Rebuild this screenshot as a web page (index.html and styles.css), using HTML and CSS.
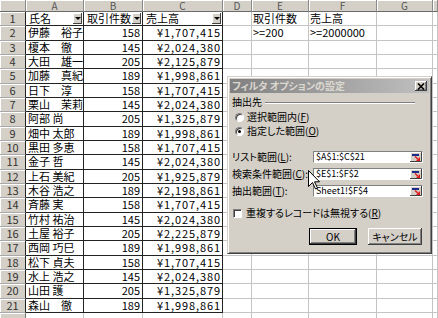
FILE: index.html
```html
<!DOCTYPE html>
<html lang="ja">
<head>
<meta charset="utf-8">
<title>フィルタ オプションの設定</title>
<link rel="stylesheet" href="styles.css">
</head>
<body>
<div class="sheet">
  <div class="row hdr"><span></span><span>A</span><span>B</span><span>C</span><span>D</span><span>E</span><span>F</span><span>G</span><span></span></div>
  <div class="row data"><span class="rh">1</span><span class="c f"><em>氏名</em><i class="dd"></i></span><span class="c f"><em>取引件数</em><i class="dd"></i></span><span class="c f"><em>売上高</em><i class="dd"></i></span><span></span><span class="t">取引件数</span><span class="t">売上高</span><span></span><span></span></div>
  <div class="row data"><span class="rh">2</span><span class="c">伊藤　裕子</span><span class="c n">158</span><span class="c y">¥1,707,415</span><span></span><span class="t">&gt;=200</span><span class="t">&gt;=2000000</span><span></span><span></span></div>
  <div class="row data"><span class="rh">3</span><span class="c">榎本　徹</span><span class="c n">145</span><span class="c y">¥2,024,380</span><span></span><span></span><span></span><span></span><span></span></div>
  <div class="row data"><span class="rh">4</span><span class="c">大田　雄一</span><span class="c n">205</span><span class="c y">¥2,125,879</span><span></span><span></span><span></span><span></span><span></span></div>
  <div class="row data"><span class="rh">5</span><span class="c">加藤　真紀</span><span class="c n">189</span><span class="c y">¥1,998,861</span><span></span><span></span><span></span><span></span><span></span></div>
  <div class="row data"><span class="rh">6</span><span class="c">日下　淳</span><span class="c n">158</span><span class="c y">¥1,707,415</span><span></span><span></span><span></span><span></span><span></span></div>
  <div class="row data"><span class="rh">7</span><span class="c">栗山　茉莉</span><span class="c n">145</span><span class="c y">¥2,024,380</span><span></span><span></span><span></span><span></span><span></span></div>
  <div class="row data"><span class="rh">8</span><span class="c">阿部 尚</span><span class="c n">205</span><span class="c y">¥1,325,879</span><span></span><span></span><span></span><span></span><span></span></div>
  <div class="row data"><span class="rh">9</span><span class="c">畑中 太郎</span><span class="c n">189</span><span class="c y">¥1,998,861</span><span></span><span></span><span></span><span></span><span></span></div>
  <div class="row data"><span class="rh">10</span><span class="c">黒田 多恵</span><span class="c n">158</span><span class="c y">¥1,707,415</span><span></span><span></span><span></span><span></span><span></span></div>
  <div class="row data"><span class="rh">11</span><span class="c">金子 哲</span><span class="c n">145</span><span class="c y">¥2,024,380</span><span></span><span></span><span></span><span></span><span></span></div>
  <div class="row data"><span class="rh">12</span><span class="c">上石 美紀</span><span class="c n">205</span><span class="c y">¥1,925,879</span><span></span><span></span><span></span><span></span><span></span></div>
  <div class="row data"><span class="rh">13</span><span class="c">木谷 浩之</span><span class="c n">189</span><span class="c y">¥2,198,861</span><span></span><span></span><span></span><span></span><span></span></div>
  <div class="row data"><span class="rh">14</span><span class="c">斉藤 実</span><span class="c n">158</span><span class="c y">¥1,707,415</span><span></span><span></span><span></span><span></span><span></span></div>
  <div class="row data"><span class="rh">15</span><span class="c">竹村 祐治</span><span class="c n">145</span><span class="c y">¥2,024,380</span><span></span><span></span><span></span><span></span><span></span></div>
  <div class="row data"><span class="rh">16</span><span class="c">土屋 裕子</span><span class="c n">205</span><span class="c y">¥2,225,879</span><span></span><span></span><span></span><span></span><span></span></div>
  <div class="row data"><span class="rh">17</span><span class="c">西岡 巧巳</span><span class="c n">189</span><span class="c y">¥1,998,861</span><span></span><span></span><span></span><span></span><span></span></div>
  <div class="row data"><span class="rh">18</span><span class="c">松下 貞夫</span><span class="c n">158</span><span class="c y">¥1,707,415</span><span></span><span></span><span></span><span></span><span></span></div>
  <div class="row data"><span class="rh">19</span><span class="c">水上 浩之</span><span class="c n">145</span><span class="c y">¥2,024,380</span><span></span><span></span><span></span><span></span><span></span></div>
  <div class="row data"><span class="rh">20</span><span class="c">山田 護</span><span class="c n">205</span><span class="c y">¥1,325,879</span><span></span><span></span><span></span><span></span><span></span></div>
  <div class="row data"><span class="rh">21</span><span class="c">森山　徹</span><span class="c n">189</span><span class="c y">¥1,998,861</span><span></span><span></span><span></span><span></span><span></span></div>
  <div class="row"><span class="rh"></span><span></span><span></span><span></span><span></span><span></span><span></span><span></span><span></span></div>
</div>

<div class="dlg">
  <div class="title">
    <span class="ttl">フィルタ オプションの設定</span>
    <span class="xbtn"><svg width="8" height="7" viewBox="0 0 8 7"><path d="M1 0.5L7 6.5M7 0.5L1 6.5" stroke="#000" stroke-width="1.6"/></svg></span>
  </div>
  <div class="body">
    <div class="group"><span>抽出先</span><i class="etch"></i></div>
    <div class="opt"><span class="rb"></span><span>選択範囲内(<u>F</u>)</span></div>
    <div class="opt"><span class="rb on"></span><span>指定した範囲(<u>O</u>)</span></div>
    <div class="field first"><span class="lbl">リスト範囲(<u>L</u>):</span><span class="inp"><span class="val">$A$1:$C$21</span><svg class="rng" width="12" height="10" viewBox="0 0 12 10"><rect width="12" height="10" fill="#d4d0c8"/><path d="M0.5 9.5V0.5H11.5" stroke="#fff" fill="none"/><path d="M0 9.5H11.5V0" stroke="#404040" fill="none"/><rect x="2" y="2" width="7" height="2" fill="#1c2a8c"/><path d="M5 4.5L9 8" stroke="#e01818" stroke-width="1.4"/><path d="M6.5 8.3H9.4V5.4" stroke="#e01818" stroke-width="1.2" fill="none"/></svg></span></div>
    <div class="field"><span class="lbl">検索条件範囲(<u>C</u>):</span><span class="inp"><span class="val">$E$1:$F$2</span><svg class="rng" width="12" height="10" viewBox="0 0 12 10"><rect width="12" height="10" fill="#d4d0c8"/><path d="M0.5 9.5V0.5H11.5" stroke="#fff" fill="none"/><path d="M0 9.5H11.5V0" stroke="#404040" fill="none"/><rect x="2" y="2" width="7" height="2" fill="#1c2a8c"/><path d="M5 4.5L9 8" stroke="#e01818" stroke-width="1.4"/><path d="M6.5 8.3H9.4V5.4" stroke="#e01818" stroke-width="1.2" fill="none"/></svg></span></div>
    <div class="field"><span class="lbl">抽出範囲(<u>T</u>):</span><span class="inp"><span class="val">Sheet1!$F$4</span><svg class="rng" width="12" height="10" viewBox="0 0 12 10"><rect width="12" height="10" fill="#d4d0c8"/><path d="M0.5 9.5V0.5H11.5" stroke="#fff" fill="none"/><path d="M0 9.5H11.5V0" stroke="#404040" fill="none"/><rect x="2" y="2" width="7" height="2" fill="#1c2a8c"/><path d="M5 4.5L9 8" stroke="#e01818" stroke-width="1.4"/><path d="M6.5 8.3H9.4V5.4" stroke="#e01818" stroke-width="1.2" fill="none"/></svg></span></div>
    <div class="chk"><span class="cb"></span><span>重複するレコードは無視する(<u>R</u>)</span></div>
    <div class="btns"><span class="btn def">OK</span><span class="btn">キャンセル</span></div>
  </div>
</div>

<svg class="cursor" width="12" height="20" viewBox="0 0 12 20"><path d="M0.5 0.5V16.5L4.5 12.5L7.5 19L9.5 18L6.5 11.8H11.5Z" fill="#fff" stroke="#000" stroke-width="1" stroke-linejoin="round"/></svg>
</body>
</html>
```

FILE: styles.css
```css
html, body {
  margin: 0;
  padding: 0;
}
body {
  width: 438px;
  height: 318px;
  overflow: hidden;
  background: #fff;
  position: relative;
  font-family: "Noto Sans CJK JP", "Noto Sans", sans-serif;
  color: #000;
}

/* ---------- sheet ---------- */
.sheet {
  display: flex;
  flex-direction: column;
}
.row {
  display: grid;
  grid-template-columns: 26px 58px 59px 80px 29px 57px 68px 56px 5px;
  height: 14.333px;
  flex: none;
}
.row > * {
  box-sizing: border-box;
  border-right: 1px solid #c4c4c4;
  border-bottom: 1px solid #c4c4c4;
  font-size: 11px;
  line-height: 13px;
  white-space: nowrap;
  overflow: hidden;
  font-style: normal;
}
.row.hdr {
  height: 12px;
}
.row.hdr > * {
  background: #d4d0c8;
  border-right-color: #8a8a8a;
  border-bottom-color: #6a6a6a;
  box-shadow: inset 1px 1px #fff;
  text-align: center;
  font-size: 10px;
  line-height: 11px;
  color: #555;
}
.rh {
  background: #d4d0c8;
  text-align: center;
  color: #333;
  box-shadow: inset 1px 1px #fff;
}
.row > .rh {
  border-right-color: #7a7a7a;
  border-bottom-color: #a8a8a8;
}
.row.data > .rh {
  border-right-color: #222;
}
.row.data > .c {
  border-right-color: #222;
  border-bottom-color: #222;
}
.c {
  padding-left: 2px;
}
.c.f {
  display: flex;
  align-items: flex-start;
  padding-left: 3px;
  padding-right: 1px;
}
.c.f em {
  flex: 1;
  min-width: 0;
  overflow: hidden;
  font-style: normal;
}
.dd {
  flex: none;
  width: 9px;
  height: 11px;
  margin-top: 1px;
  background: #d4d0c8;
  box-shadow: inset -1px -1px #404040, inset 1px 1px #fff;
  display: flex;
  align-items: center;
  justify-content: center;
}
.dd::after {
  content: "";
  border-left: 3px solid transparent;
  border-right: 3px solid transparent;
  border-top: 3px solid #000;
}
.n, .y {
  text-align: right;
  padding-right: 2px;
  padding-left: 0;
}
.y {
  letter-spacing: 0.9px;
  padding-right: 1px;
}
.t {
  padding-left: 1px;
}

/* ---------- dialog ---------- */
.dlg {
  position: absolute;
  left: 227px;
  top: 76px;
  width: 205px;
  height: 178px;
  box-sizing: border-box;
  background: #d4d0c8;
  border: 1px solid;
  border-color: #d4d0c8 #404040 #404040 #d4d0c8;
  box-shadow: inset 1px 1px #fff, inset -1px -1px #808080;
  padding: 2px;
  display: flex;
  flex-direction: column;
  font-size: 10px;
  font-feature-settings: "palt";
}
.title {
  height: 14px;
  background: linear-gradient(to right, #808080, #c0c0c0);
  display: flex;
  align-items: center;
  justify-content: space-between;
  padding: 0 2px 0 2px;
  flex: none;
}
.ttl {
  color: #dcd8d0;
  font-weight: bold;
  font-size: 10px;
  line-height: 14px;
}
.xbtn {
  width: 12px;
  height: 10px;
  background: #d4d0c8;
  box-shadow: inset -1px -1px #404040, inset 1px 1px #fff, inset -2px -2px #808080;
  display: flex;
  align-items: center;
  justify-content: center;
}
.xbtn svg { display: block; }
.body {
  display: flex;
  flex-direction: column;
  padding: 3px 6px 0 2px;
  line-height: 12px;
}
.group {
  display: flex;
  align-items: center;
  gap: 3px;
  height: 12px;
  padding-right: 8px;
}
.etch {
  flex: 1;
  height: 0;
  border-top: 1px solid #808080;
  border-bottom: 1px solid #fff;
  margin-top: 1px;
}
.opt {
  display: flex;
  align-items: center;
  height: 14px;
  margin-top: 2px;
  padding-left: 3px;
  gap: 3px;
}
.opt + .opt { margin-top: 0; }
.rb {
  flex: none;
  width: 9px;
  height: 9px;
  border-radius: 50%;
  box-sizing: border-box;
  background: #fff;
  border: 1px solid;
  border-color: #808080 #fff #fff #808080;
  box-shadow: inset 1px 1px #404040;
  position: relative;
}
.rb.on::after {
  content: "";
  position: absolute;
  left: 2px;
  top: 2px;
  width: 3px;
  height: 3px;
  border-radius: 50%;
  background: #000;
}
.field {
  display: flex;
  align-items: center;
  height: 12px;
  margin-top: 5px;
}
.field.first { margin-top: 13px; }
.lbl {
  width: 81px;
  flex: none;
  white-space: nowrap;
}
.inp {
  width: 110px;
  height: 12px;
  box-sizing: border-box;
  background: #fff;
  border: 1px solid;
  border-color: #808080 #fff #fff #808080;
  display: flex;
  align-items: center;
  padding-left: 2px;
  font-size: 9px;
  font-feature-settings: normal;
}
.val {
  flex: 1;
  line-height: 10px;
}
.rng {
  display: block;
  flex: none;
}
.chk {
  display: flex;
  align-items: center;
  gap: 4px;
  height: 12px;
  margin-top: 10px;
  padding-left: 1px;
}
.cb {
  flex: none;
  width: 9px;
  height: 9px;
  box-sizing: border-box;
  background: #fff;
  border: 1px solid;
  border-color: #808080 #fff #fff #808080;
  box-shadow: inset 1px 1px #404040;
}
.btns {
  display: flex;
  justify-content: flex-end;
  gap: 11px;
  margin-top: 9px;
  padding-right: 1px;
}
.btn {
  height: 17px;
  box-sizing: border-box;
  background: #d4d0c8;
  box-shadow: inset -1px -1px #404040, inset 1px 1px #fff, inset -2px -2px #808080;
  display: flex;
  align-items: center;
  justify-content: center;
  width: 54px;
  font-size: 10px;
}
.btn.def {
  width: 48px;
  border: 1px solid #000;
}

.cursor {
  position: absolute;
  left: 308px;
  top: 170px;
  display: block;
}
```
